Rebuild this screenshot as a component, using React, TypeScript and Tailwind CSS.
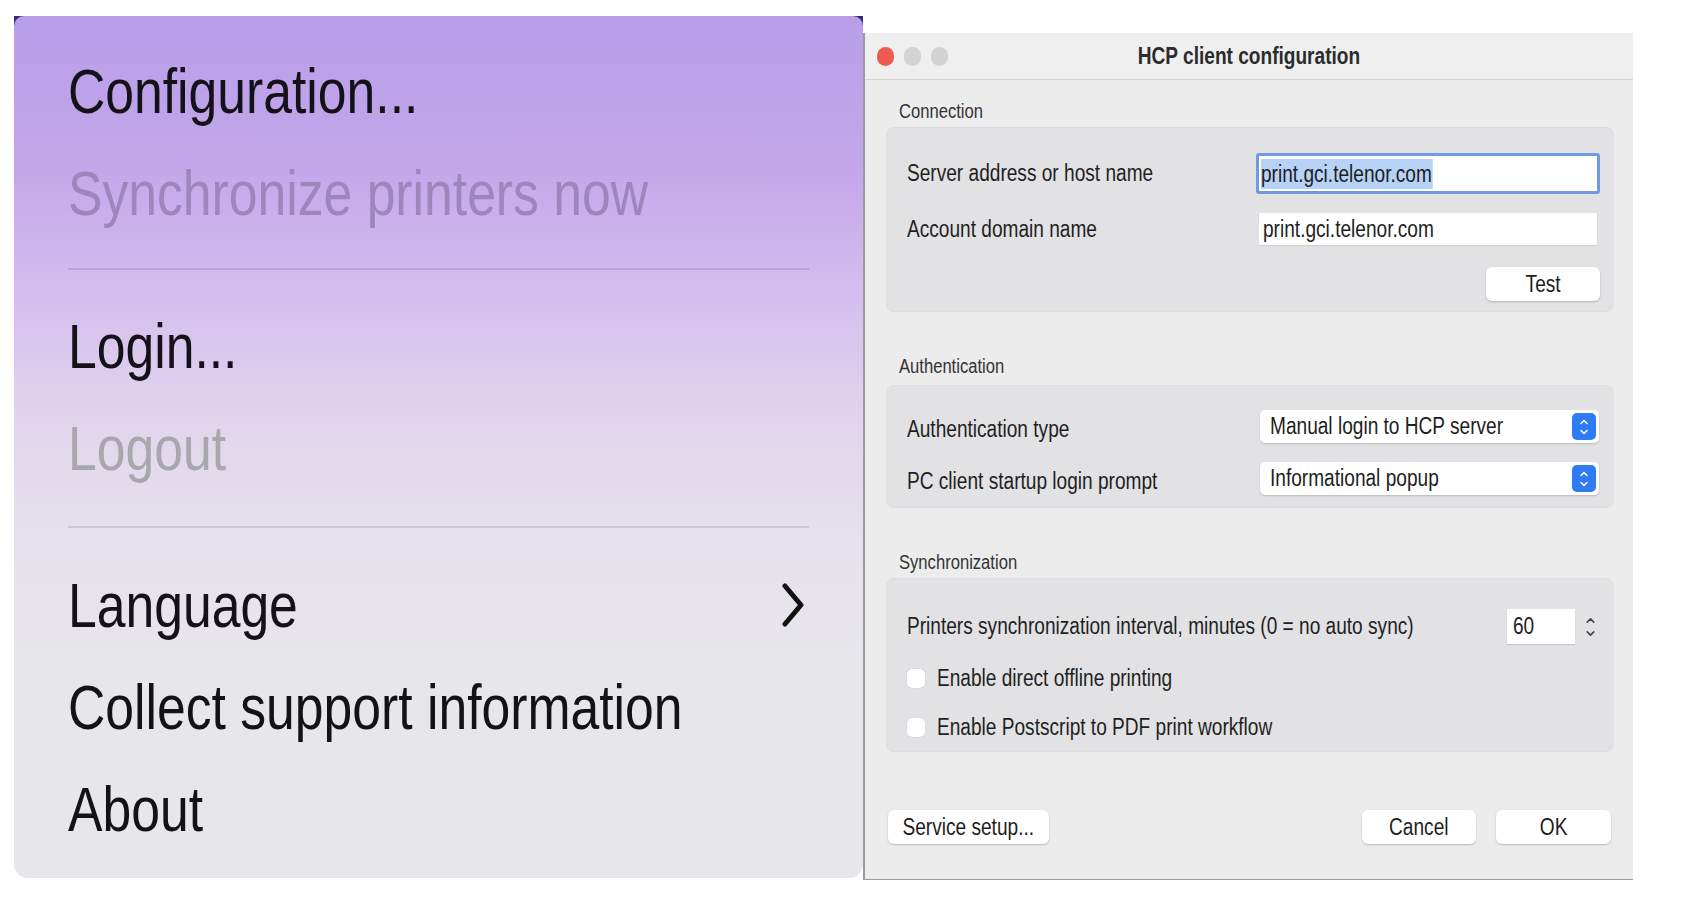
import { ChevronDown, ChevronUp } from 'lucide-react'

const sans = "font-['Liberation_Sans',Arial,sans-serif]"

// the screenshot is horizontally squeezed, so text gets a narrow x-scale
function T({ children, center = false, menu = false }: { children: string; center?: boolean; menu?: boolean }) {
  if (menu) return <span className="inline-block whitespace-nowrap origin-left scale-x-[0.82]">{children}</span>
  if (center) return <span className="inline-block whitespace-nowrap origin-center scale-x-[0.83]">{children}</span>
  return <span className="inline-block whitespace-nowrap origin-left scale-x-[0.83]">{children}</span>
}

function MenuItem({ label, tone = 'normal', submenu = false }: { label: string; tone?: 'normal' | 'purple' | 'gray'; submenu?: boolean }) {
  const color = tone === 'purple' ? 'text-[#9c86bb]' : tone === 'gray' ? 'text-[#a8a7ad]' : 'text-[#141218]'
  return (
    <div className={`h-[102px] leading-[102px] px-[54px] text-[63px] flex items-center justify-between ${color}`}>
      <div className="min-w-0">
        <T menu>{label}</T>
      </div>
      {submenu && (
        <svg width="24" height="44" viewBox="0 0 24 44" fill="none" className="mr-[4px] shrink-0">
          <path d="M4 3 L20 22 L4 41" stroke="#111" strokeWidth="5" strokeLinecap="round" strokeLinejoin="round" />
        </svg>
      )}
    </div>
  )
}

function MenuPanel() {
  return (
    <div className="bg-[linear-gradient(180deg,#2e2c7c_0px,#2e2c7c_12px,transparent_12px)]">
      <div className={`w-[849px] h-[862px] rounded-t-[10px] rounded-b-[14px] pt-[24px] bg-[linear-gradient(180deg,#b89ee9_0%,#c4a7ea_18%,#d6bfee_33%,#e1d6ed_48%,#e6e2eb_62%,#e7e7ea_78%,#e7e7ea_100%)] ${sans}`}>
        <MenuItem label="Configuration..." />
        <MenuItem label="Synchronize printers now" tone="purple" />
        <div className="mx-[54px] mt-[24px] h-[2px] bg-[#b9a5d3]" />
        <div className="mt-[25px]">
          <MenuItem label="Login..." />
          <MenuItem label="Logout" tone="gray" />
        </div>
        <div className="mx-[54px] mt-[27px] h-[2px] bg-[#c9c8cd]" />
        <div className="mt-[26px]">
          <MenuItem label="Language" submenu />
          <MenuItem label="Collect support information" />
          <MenuItem label="About" />
        </div>
      </div>
    </div>
  )
}

function SectionTitle({ children, className = '' }: { children: string; className?: string }) {
  return (
    <div className={`h-[32px] flex items-center pl-[34px] text-[20px] text-[#333] ${className}`}>
      <T>{children}</T>
    </div>
  )
}

function Select({ value }: { value: string }) {
  return (
    <div className="w-[339px] h-[33px] bg-white rounded-[5px] shadow-[0_1px_2px_rgba(0,0,0,0.18)] flex items-center justify-between pl-[10px] pr-[3px]">
      <span className="text-[23px] text-[#1e1e1e]">
        <T>{value}</T>
      </span>
      <div className="w-[24px] h-[27px] rounded-[5px] bg-[#2f7bf5] flex flex-col items-center justify-center text-white">
        <ChevronUp size={12} strokeWidth={3} className="-mb-[1px]" />
        <ChevronDown size={12} strokeWidth={3} className="-mt-[1px]" />
      </div>
    </div>
  )
}

function Button({ children, width }: { children: string; width: string }) {
  return (
    <div className={`${width} h-[34px] bg-white rounded-[6px] shadow-[0_1px_2px_rgba(0,0,0,0.22)] flex items-center justify-center text-[23px] text-[#1e1e1e]`}>
      <T center>{children}</T>
    </div>
  )
}

function Checkbox({ label }: { label: string }) {
  return (
    <div className="h-[30px] flex items-center gap-[12px]">
      <div className="w-[18px] h-[19px] rounded-[5px] bg-white shadow-[0_0_1px_rgba(0,0,0,0.25)] shrink-0" />
      <span className="text-[23px] text-[#1f1f1f]">
        <T>{label}</T>
      </span>
    </div>
  )
}

function Dialog() {
  return (
    <div className={`mt-[17px] w-[770px] h-[847px] bg-[#ececec] border-l-2 border-b border-[#9a9aa6] flex flex-col ${sans}`}>
      {/* title bar */}
      <div className="h-[47px] shrink-0 bg-[#efefef] border-b border-[#d4d4d4] grid grid-cols-[1fr_auto_1fr] items-center">
        <div className="flex items-center gap-[10px] pl-[12px]">
          <div className="w-[17px] h-[19px] rounded-full bg-[#ee5a52]" />
          <div className="w-[17px] h-[19px] rounded-full bg-[#d3d3d5]" />
          <div className="w-[17px] h-[19px] rounded-full bg-[#d3d3d5]" />
        </div>
        <div className="text-[23px] font-bold text-[#2c2c2c]">
          <T center>HCP client configuration</T>
        </div>
        <div />
      </div>

      <SectionTitle className="mt-[15px]">Connection</SectionTitle>
      <div className="ml-[21px] mr-[19px] h-[185px] rounded-[8px] bg-[#e2e2e4] border border-[#dddddf] pt-[25px] pl-[20px] pr-[13px]">
        <div className="h-[41px] flex items-center justify-between">
          <span className="text-[23px] text-[#1f1f1f]">
            <T>Server address or host name</T>
          </span>
          <div className="w-[344px] h-[41px] bg-white rounded-[3px] border-[3px] border-[#6f9be4] flex items-center pl-[2px]">
            <span className="inline-block whitespace-nowrap origin-left scale-x-[0.83] text-[23px] leading-[30px] text-[#1d1d1d] bg-[#b7d2f7] pr-[1px]">
              print.gci.telenor.com
            </span>
          </div>
        </div>
        <div className="mt-[19px] h-[32px] flex items-center justify-between">
          <span className="text-[23px] text-[#1f1f1f]">
            <T>Account domain name</T>
          </span>
          <div className="w-[338px] h-[32px] mr-[3px] bg-white shadow-[0_1px_1px_rgba(0,0,0,0.08)] flex items-center pl-[4px]">
            <span className="text-[23px] text-[#222]">
              <T>print.gci.telenor.com</T>
            </span>
          </div>
        </div>
        <div className="mt-[22px] flex justify-end">
          <Button width="w-[114px]">Test</Button>
        </div>
      </div>

      <SectionTitle className="mt-[38px]">Authentication</SectionTitle>
      <div className="mt-[3px] ml-[21px] mr-[19px] h-[123px] rounded-[8px] bg-[#e2e2e4] border border-[#dddddf] pt-[24px] pl-[20px] pr-[14px]">
        <div className="h-[33px] flex items-center justify-between">
          <span className="text-[23px] text-[#1f1f1f] mt-[6px]">
            <T>Authentication type</T>
          </span>
          <Select value="Manual login to HCP server" />
        </div>
        <div className="mt-[19px] h-[33px] flex items-center justify-between">
          <span className="text-[23px] text-[#1f1f1f] mt-[6px]">
            <T>PC client startup login prompt</T>
          </span>
          <Select value="Informational popup" />
        </div>
      </div>

      <SectionTitle className="mt-[38px]">Synchronization</SectionTitle>
      <div className="ml-[21px] mr-[19px] h-[174px] rounded-[8px] bg-[#e2e2e4] border border-[#dddddf] pt-[30px] pl-[20px] pr-[15px]">
        <div className="h-[35px] flex items-center">
          <div className="flex-1 min-w-0 text-[23px] text-[#1f1f1f]">
            <T>Printers synchronization interval, minutes (0 = no auto sync)</T>
          </div>
          <div className="w-[68px] h-[35px] bg-white shadow-[0_1px_1px_rgba(0,0,0,0.12)] flex items-center pl-[6px] shrink-0">
            <span className="text-[23px] text-[#222]">
              <T>60</T>
            </span>
          </div>
          <div className="ml-[7px] w-[16px] h-[34px] rounded-[4px] flex flex-col items-center justify-center text-[#444] shrink-0">
            <ChevronUp size={13} strokeWidth={3} />
            <ChevronDown size={13} strokeWidth={3} />
          </div>
        </div>
        <div className="mt-[19px]">
          <Checkbox label="Enable direct offline printing" />
        </div>
        <div className="mt-[19px]">
          <Checkbox label="Enable Postscript to PDF print workflow" />
        </div>
      </div>

      <div className="mt-[58px] ml-[23px] mr-[22px] flex items-center">
        <Button width="w-[161px]">Service setup...</Button>
        <div className="flex-1" />
        <Button width="w-[114px]">Cancel</Button>
        <div className="w-[20px]" />
        <Button width="w-[115px]">OK</Button>
      </div>
    </div>
  )
}

export default function App() {
  return (
    <div className="w-[1696px] h-[916px] bg-white flex items-start pl-[14px] pt-[16px] overflow-hidden">
      <MenuPanel />
      <Dialog />
    </div>
  )
}
